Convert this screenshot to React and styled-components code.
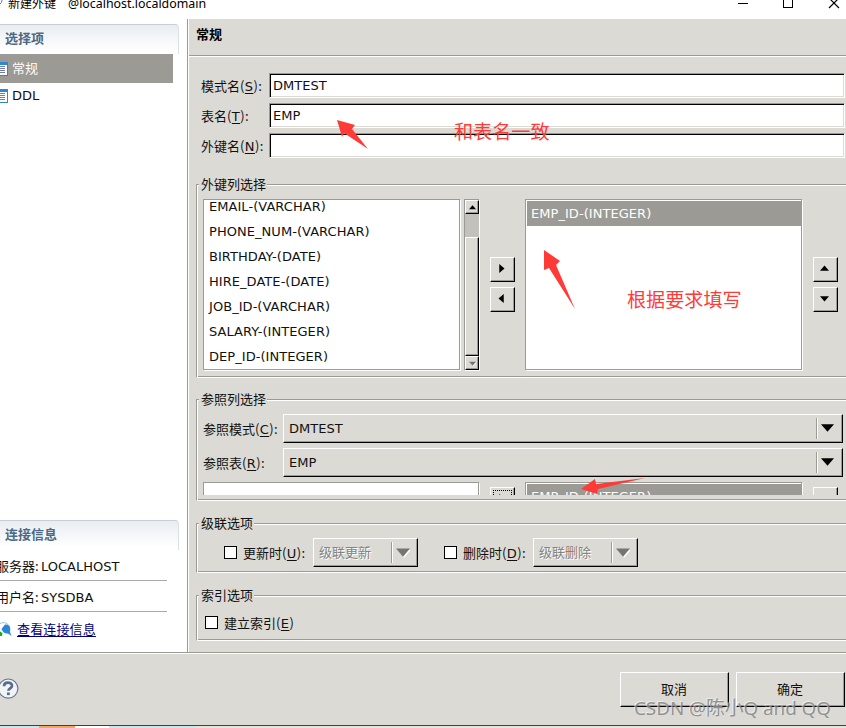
import React from "react"
import styled, {createGlobalStyle, ThemeProvider, css} from "styled-components";

const theme = {
    face: '#dcdad5',
    shadow: '#9c9a94',
    trough: '#c3c1bc',
    mark: '#ff3b38',
    ui: '"DejaVu Sans", "Noto Sans CJK SC", sans-serif',
    cjk: '"Noto Sans CJK SC", sans-serif',
}

const columns = [
    'EMAIL-(VARCHAR)',
    'PHONE_NUM-(VARCHAR)',
    'BIRTHDAY-(DATE)',
    'HIRE_DATE-(DATE)',
    'JOB_ID-(VARCHAR)',
    'SALARY-(INTEGER)',
    'DEP_ID-(INTEGER)',
]

const Triangle = ({dir, size = 9, disabled}) => {
    const turn = {up: 180, down: 0, left: 90, right: -90}[dir]
    return (
        <svg width={size} height={size} viewBox="0 0 12 12">
            {disabled && <path d="M1 4h12l-6 7z" fill="#fff" />}
            <path d="M0 3h12l-6 7z" fill={disabled ? '#777572' : '#000'} transform={`rotate(${turn} 6 6)`}/>
        </svg>
    )
}

const Mnemonic = ({text, letter, end = ':'}) => (
    <>{text}<Tail>(<Key>{letter}</Key>){end}</Tail></>
)

const Select = ({value, width, disabled}) => (
    <Combo $width={width} $disabled={disabled}>
        <span>{value}</span>
        <ComboArrow><Triangle dir="down" size={disabled ? 14 : 13} disabled={disabled}/></ComboArrow>
    </Combo>
)

const PageIcon = () => (
    <svg width="8" height="14" viewBox="0 0 8 14">
        <path d="M0 0h8v14H0z" fill="#2f86d6"/>
        <path d="M0 3h7v10H0z" fill="#fff"/>
        <path d="M0 4.5h5M0 6.5h5M0 8.5h5M0 10.5h5" stroke="#6f7fa8" strokeWidth="1"/>
    </svg>
)

const LinkIcon = () => (
    <svg width="12" height="16" viewBox="0 0 12 16">
        <path d="M0 1.5C4-.5 8 1 9.5 5" fill="none" stroke="#8fc3d8"/>
        <path d="M1.5 7L5 2.5c5-.5 6 4 5 7.5l1.5 4-3.5-2.5c-3 .5-5-1-6.5-4.500z" fill="#2c86d8"/>
        <path d="M0 9.500l2.500 1.500-.5 3H0z" fill="#25a52b"/>
    </svg>
)

const HelpIcon = () => (
    <svg width="20" height="22" viewBox="0 0 20 22">
        <circle cx="8.3" cy="10.600" r="9.600" fill="#f3f4f6" stroke="#667796" strokeWidth="1.200"/>
        <path d="M4 8.200C4 3.500 12 3.700 12 7.800c0 2.700-3.600 2.600-3.600 5" fill="none" stroke="#586b91" strokeWidth="2.700"/>
        <path d="M7 14.500h2.800v2.600H7z" fill="#586b91"/>
    </svg>
)

const TitleBar = () => (
    <Title>
        <svg width="4" height="6"><path d="M0 4Q2 3 2 0" stroke="#3d83c4" fill="none"/></svg>
        <TitleText>新建外键</TitleText>
        <TitleHost>@localhost.localdomain</TitleHost>
        <WindowControls>
            <svg width="110" height="10" viewBox="0 0 110 10" fill="none" stroke="#000" shapeRendering="crispEdges">
                <path d="M2 3.5h10M47.5-2v9.5h9V-2"/>
                <path d="M93-2l10 10M103-2l-10 10" shapeRendering="auto" strokeWidth="1.2"/>
            </svg>
        </WindowControls>
    </Title>
)

const Sidebar = () => (
    <Side>
        <SideHeader>选择项</SideHeader>
        <NavItem $selected><PageIcon/>常规</NavItem>
        <NavItem><PageIcon/>DDL</NavItem>
        <Spacer/>
        <SideHeader>连接信息</SideHeader>
        <Info><Zh>服务器: </Zh>LOCALHOST</Info>
        <Info><Zh>用户名: </Zh>SYSDBA</Info>
        <LinkRow><LinkIcon/><Link href="#">查看连接信息</Link></LinkRow>
    </Side>
)

const App = () => (
    <ThemeProvider theme={theme}>
        <GlobalStyle/>
        <Window>
            <TitleBar/>
            <Body>
                <Sidebar/>
                <Content>
                    <Heading>常规</Heading>
                    <Form>
                        <Field><Label $width={68}><Mnemonic text="模式名" letter="S"/></Label><Input defaultValue="DMTEST"/></Field>
                        <Field><Label $width={68}><Mnemonic text="表名" letter="T"/></Label><Input defaultValue="EMP"/></Field>
                        <Field><Label $width={68}><Mnemonic text="外键名" letter="N"/></Label><Input defaultValue=""/></Field>
                    </Form>

                    <Group $height={194}>
                        <Legend>外键列选择</Legend>
                        <Lists $top={5}>
                            <List $width={257}>
                                <Rows $shift={-6}>
                                    {columns.map(name => <Row key={name}>{name}</Row>)}
                                </Rows>
                            </List>
                            <Scrollbar>
                                <ScrollButton><Triangle dir="up" size={7}/></ScrollButton>
                                <Thumb/>
                                <ScrollButton><Triangle dir="down" size={7} disabled/></ScrollButton>
                            </Scrollbar>
                            <ButtonColumn $left={11}>
                                <SmallButton><Triangle dir="right"/></SmallButton>
                                <SmallButton><Triangle dir="left"/></SmallButton>
                            </ButtonColumn>
                            <List $width={277} $left={10}>
                                <Rows $shift={1}><Row $selected>EMP_ID-(INTEGER)</Row></Rows>
                            </List>
                            <ButtonColumn $left={11}>
                                <SmallButton><Triangle dir="up"/></SmallButton>
                                <SmallButton><Triangle dir="down"/></SmallButton>
                            </ButtonColumn>
                        </Lists>
                    </Group>

                    <Group $height={102} $top={21}>
                        <Legend>参照列选择</Legend>
                        <Viewport>
                            <RefRow><Label $width={80}><Mnemonic text="参照模式" letter="C"/></Label><Select value="DMTEST" width={560}/></RefRow>
                            <RefRow><Label $width={80}><Mnemonic text="参照表" letter="R"/></Label><Select value="EMP" width={560}/></RefRow>
                            <Lists $top={0}>
                                <List $width={276}/>
                                <ButtonColumn $left={11} $top={5}>
                                    <SmallButton $focused><Triangle dir="right"/></SmallButton>
                                </ButtonColumn>
                                <List $width={277} $left={10}>
                                    <Rows $shift={1}><Row $selected>EMP_ID-(INTEGER)</Row></Rows>
                                </List>
                                <ButtonColumn $left={11} $top={5}>
                                    <SmallButton/>
                                </ButtonColumn>
                            </Lists>
                        </Viewport>
                    </Group>

                    <Group $height={50} $top={22}>
                        <Legend>级联选项</Legend>
                        <Options $left={27} $top={5}>
                            <Check/><Label $width={70}><Mnemonic text="更新时" letter="U"/></Label>
                            <Select value="级联更新" width={105} disabled/>
                            <Gap/>
                            <Check/><Label $width={70}><Mnemonic text="删除时" letter="D"/></Label>
                            <Select value="级联删除" width={105} disabled/>
                        </Options>
                    </Group>

                    <Group $height={46} $top={22}>
                        <Legend>索引选项</Legend>
                        <Options $left={8} $top={3}>
                            <Check/><Label $width={90}><Mnemonic text="建立索引" letter="E" end=""/></Label>
                        </Options>
                    </Group>
                </Content>
            </Body>
            <Footer>
                <HelpIcon/>
                <Actions>
                    <ActionButton>取消</ActionButton>
                    <ActionButton>确定</ActionButton>
                </Actions>
            </Footer>
            <Taskbar><TaskItem/></Taskbar>

            <Annotation $x={454} $y={118}>和表名一致</Annotation>
            <Annotation $x={627} $y={286}>根据要求填写</Annotation>
            <Arrows viewBox="0 0 846 728">
                <path d="M337 120l18 5-3 4 16 20-24-16-2 4z"/>
                <path d="M544 250l16 11-4 4 19 44-26-41-5 2z"/>
                <path d="M581 489l14-10 1 5 49-6-47 11-1 5z"/>
            </Arrows>
            <Watermark>CSDN @陈小Q and QQ</Watermark>
        </Window>
    </ThemeProvider>
)

export default App

const GlobalStyle = createGlobalStyle`
  body{
    margin: 0;
    overflow: hidden;
  }
  *{
    box-sizing: border-box;
  }
  svg{
    display: block;
    flex: none;
  }
`

// raised bevel shared by every button-like control
const raised = css`
  background: ${props => props.theme.face};
  border: 1px solid;
  border-color: #fff #000 #000 #fff;
  box-shadow: inset -1px -1px 0 ${props => props.theme.shadow};
`

const Window = styled.div`
  position: relative;
  display: flex;
  flex-direction: column;
  width: 846px;
  height: 728px;
  overflow: hidden;
  background: ${props => props.theme.face};
  color: #111;
  font-family: ${props => props.theme.ui};
  font-size: 13px;
  line-height: 20px;
  white-space: nowrap;
`

const Title = styled.div`
  display: flex;
  height: 19px;
  flex: none;
  background: #fff;
  font-family: "Noto Sans", "Noto Sans CJK SC", sans-serif;
  font-size: 12px;
  line-height: 18px;
  color: #000;
`

const TitleText = styled.span`
  width: 64px;
  padding-left: 4px;
  margin-top: -5px;
`

const TitleHost = styled.span`
  margin-top: -5px;
  font-size: 12.4px;
`

const WindowControls = styled.div`
  margin-left: auto;
  width: 110px;
`

const Body = styled.div`
  display: flex;
  height: 633px;
  flex: none;
`

const Side = styled.div`
  display: flex;
  flex-direction: column;
  width: 188px;
  flex: none;
  padding-top: 5px;
  background: #fff;
  border-right: 1px solid ${props => props.theme.shadow};
`

const SideHeader = styled.div`
  width: 179px;
  height: 30px;
  padding-left: 5px;
  border-top: 1px solid #c5d0da;
  border-right: 1px solid #d9e0e6;
  border-top-right-radius: 4px;
  background: linear-gradient(#e9edf1, #fff 90%);
  color: #4b6884;
  font-weight: bold;
  line-height: 27px;
`

const NavItem = styled.div`
  display: flex;
  align-items: center;
  gap: 4px;
  width: 173px;
  height: ${props => props.$selected ? '29px' : '25px'};
  background: ${props => props.$selected ? props.theme.shadow : '#fff'};
  color: ${props => props.$selected ? '#fff' : '#111'};
`

const Spacer = styled.div`
  flex: 1;
`

const Info = styled.div`
  width: 171px;
  height: 31px;
  padding-top: 6px;
  margin-left: -4px;
  border-bottom: 1px solid #aaa;
`

const Zh = styled.span`
  font-family: ${props => props.theme.cjk};
  white-space: pre;
  margin-right: -.5px;
`

const LinkRow = styled.div`
  display: flex;
  align-items: center;
  gap: 5px;
  height: 40px;
  padding-bottom: 5px;
`

const Link = styled.a`
  color: #00007f;
  letter-spacing: .15px;
  text-underline-offset: 2px;
`

const Content = styled.div`
  flex: 1;
  min-width: 0;
  border-left: 1px solid #fff;
`

const Heading = styled.div`
  height: 38px;
  padding-left: 7px;
  border-bottom: 1px solid #fff;
  box-shadow: inset 0 -1px 0 ${props => props.theme.shadow};
  color: #000;
  font-weight: bold;
  line-height: 32px;
`

const Form = styled.div`
  display: flex;
  flex-direction: column;
  gap: 5px;
  padding: 16px 1px 26px 12px;
`

const Field = styled.div`
  display: flex;
  align-items: center;
  height: 25px;
`

const Label = styled.label`
  flex: none;
  width: ${props => props.$width}px;
  padding-top: 2px;
  font-family: ${props => props.theme.cjk};
`

const Tail = styled.span`
  letter-spacing: .4px;
`

const Key = styled.span`
  font-family: ${props => props.theme.ui};
  text-decoration: underline;
  text-underline-offset: 2px;
`

const Input = styled.input`
  flex: 1;
  min-width: 0;
  height: 25px;
  padding: 0 3px;
  border: 1px solid;
  border-color: ${props => props.theme.shadow} #fff #fff ${props => props.theme.shadow};
  border-radius: 0;
  background: #fff;
  box-shadow: inset 1px 1px 0 #000, inset -1px -1px 0 ${props => props.theme.face};
  color: #111;
  font: 13px/20px ${props => props.theme.ui};
`

const Group = styled.div`
  height: ${props => props.$height}px;
  margin: ${props => props.$top || 0}px -4px 0 7px;
  border: 1px solid ${props => props.theme.shadow};
  border-bottom-color: #fff;
  box-shadow: inset 1px 1px 0 #fff, inset 0 -1px 0 ${props => props.theme.shadow};
`

const Legend = styled.div`
  width: max-content;
  height: 20px;
  margin: -11px 0 0 2px;
  padding: 1px 1px 0 2px;
  background: ${props => props.theme.face};
`

const Lists = styled.div`
  display: flex;
  padding: ${props => props.$top}px 0 0 6px;
`

const List = styled.div`
  flex: none;
  width: ${props => props.$width}px;
  height: 171px;
  margin-left: ${props => props.$left || 0}px;
  overflow: hidden;
  border: 1px solid ${props => props.theme.shadow};
  background: #fff;
  box-shadow: 1px 1px 0 #fff;
`

const Rows = styled.div`
  margin-top: ${props => props.$shift}px;
`

const Row = styled.div`
  height: 25px;
  margin-left: ${props => props.$selected ? 1 : 0}px;
  padding-left: ${props => props.$selected ? 4 : 5}px;
  letter-spacing: .05px;
  line-height: 25px;
  background: ${props => props.$selected ? props.theme.shadow : '#fff'};
  color: ${props => props.$selected ? '#fff' : '#111'};
`

const Scrollbar = styled.div`
  display: flex;
  flex-direction: column;
  width: 15px;
  height: 171px;
  margin-left: 4px;
  background: ${props => props.theme.trough};
  box-shadow: inset 1px 1px 0 ${props => props.theme.shadow}, 1px 1px 0 #fff;
`

const ScrollButton = styled.div`
  ${raised};
  display: flex;
  align-items: center;
  justify-content: center;
  height: 14px;
  margin-left: 1px;
  flex: none;

  &:first-child{
    margin-top: 1px;
  }
`

const Thumb = styled.div`
  ${raised};
  flex: 1;
  margin: 23px 0 0 1px;
`

const ButtonColumn = styled.div`
  display: flex;
  flex-direction: column;
  gap: 5px;
  margin-left: ${props => props.$left}px;
  padding-top: ${props => props.$top || 58}px;
`

const SmallButton = styled.button`
  ${raised};
  display: flex;
  align-items: center;
  justify-content: center;
  width: 25px;
  height: 25px;
  padding: 0 2px 2px 0;
  outline: ${props => props.$focused ? '1px dotted #000' : 'none'};
  outline-offset: -4px;
`

// the lower lists run past the visible part of the group
const Viewport = styled.div`
  height: 86px;
  overflow: hidden;
  padding-top: 5px;
`

const RefRow = styled.div`
  display: flex;
  align-items: center;
  height: 29px;
  margin: 0 0 5px 6px;
`

const Combo = styled.div`
  ${raised};
  display: flex;
  align-items: center;
  justify-content: space-between;
  flex: none;
  width: ${props => props.$width}px;
  height: 29px;
  padding: 0 0 0 5px;
  color: ${props => props.$disabled ? '#85837e' : '#111'};
  text-shadow: ${props => props.$disabled ? '1px 1px 0 #fff' : 'none'};
`

const ComboArrow = styled.div`
  width: 26px;
  height: 21px;
  padding: 3px 0 0 4px;
  border-left: 1px solid ${props => props.theme.shadow};
  box-shadow: inset 1px 0 0 #fff;
`

const Options = styled.div`
  display: flex;
  align-items: center;
  height: 29px;
  margin: ${props => props.$top}px 0 0 ${props => props.$left}px;
`

const Check = styled.div`
  width: 13px;
  height: 13px;
  flex: none;
  margin-right: 6px;
  border: 1px solid #000;
  background: #fff;
`

const Gap = styled.div`
  width: 26px;
`

const Footer = styled.div`
  display: flex;
  align-items: center;
  justify-content: space-between;
  height: 73px;
  flex: none;
  padding-right: 1px;
  border-top: 1px solid ${props => props.theme.shadow};
  box-shadow: inset 0 1px 0 #fff;
`

const Actions = styled.div`
  display: flex;
  gap: 7px;
`

const ActionButton = styled.button`
  ${raised};
  width: 109px;
  height: 35px;
  padding: 2px 1px 0 0;
  color: #111;
  font: 13px/20px ${props => props.theme.ui};
`

const Taskbar = styled.div`
  height: 3px;
  flex: none;
  border-top: 1px solid #3c4443;
  background: linear-gradient(90deg, #cde6ec 196px, #e4e4dc 196px);
`

const TaskItem = styled.div`
  width: 70px;
  height: 2px;
  margin-left: 39px;
  background: linear-gradient(90deg, #f0a868 36px, #fff 36px);
`

const Annotation = styled.div`
  position: absolute;
  left: ${props => props.$x}px;
  top: ${props => props.$y}px;
  color: ${props => props.theme.mark};
  font: 19.1px/26px ${props => props.theme.cjk};
`

const Arrows = styled.svg`
  position: absolute;
  inset: 0;
  width: 846px;
  height: 728px;
  fill: ${props => props.theme.mark};
  pointer-events: none;
`

const Watermark = styled.div`
  position: absolute;
  left: 634px;
  top: 695px;
  color: rgba(120, 120, 120, .75);
  font: 18.8px/26px "Noto Sans", ${props => props.theme.cjk};
  text-shadow: -1px -1px 0 rgba(255, 255, 255, .5);
`
